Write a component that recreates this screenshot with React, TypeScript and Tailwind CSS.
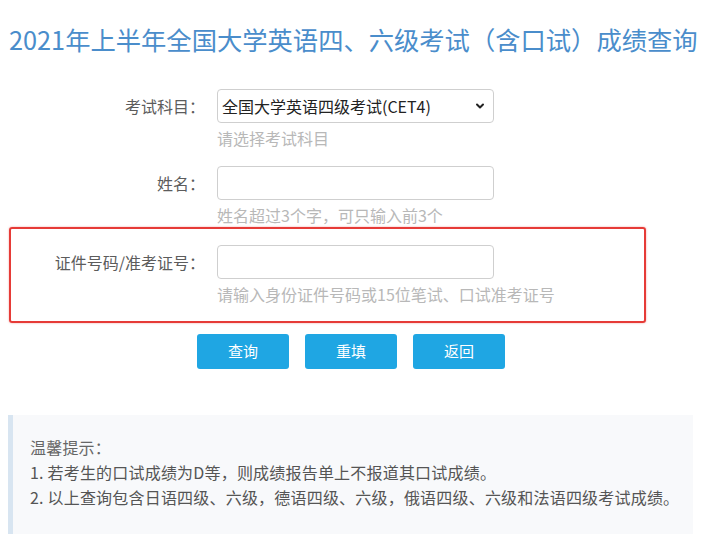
import { ChevronDown } from 'lucide-react';

const hintClass = 'mt-[4px] text-[16px] leading-[22px] text-[#b8b8b8]';
const inputClass =
  'h-[34px] w-[277px] rounded-[4px] border border-[#cfcfcf] bg-white px-[4px] text-[16px] text-[#222] outline-none';

function Row({ label, hint, children }: { label: string; hint: string; children: React.ReactNode }) {
  return (
    <div className="flex items-start">
      <div className="w-[194px] shrink-0 text-right text-[16px] leading-[34px] text-[#5c5c5c]">{label}</div>
      <div className="ml-[12px] flex flex-col">
        {children}
        <p className={hintClass}>{hint}</p>
      </div>
    </div>
  );
}

export default function App() {
  return (
    <div className="h-[542px] w-[720px] overflow-hidden bg-white font-['Noto_Sans_CJK_SC','Noto_Sans',sans-serif]">
      {/* Title */}
      <h1 className="pl-[9px] pt-[21px] text-[25.3px] leading-[37px] font-normal text-[#4a8dcb] whitespace-nowrap">
        2021年上半年全国大学英语四、六级考试（含口试）成绩查询
      </h1>

      {/* Form */}
      <div className="mt-[31px] pl-[9px]">
        <div className="pl-[2px]">
          <Row label="考试科目：" hint="请选择考试科目">
            <div className="relative">
              <select className={`${inputClass} w-[275px] appearance-none`} defaultValue="cet4">
                <option value="cet4">全国大学英语四级考试(CET4)</option>
                <option value="cet6">全国大学英语六级考试(CET6)</option>
              </select>
              <ChevronDown
                className="pointer-events-none absolute right-[8px] top-[11px] h-[12px] w-[12px] text-[#222]"
                strokeWidth={4}
              />
            </div>
          </Row>
          <div className="mt-[17px]">
            <Row label="姓名：" hint="姓名超过3个字，可只输入前3个">
              <input className={inputClass} />
            </Row>
          </div>
        </div>

        {/* Highlighted ID row */}
        <div className="mt-[1px] w-[637px] rounded-[3px] border-2 border-[#e63b37] pt-[16px] pb-[16px] shadow-[0_0_2px_rgba(230,59,55,0.5)]">
          <Row label="证件号码/准考证号：" hint="请输入身份证件号码或15位笔试、口试准考证号">
            <input className={inputClass} />
          </Row>
        </div>
      </div>

      {/* Buttons */}
      <div className="mt-[11px] ml-[197px] flex gap-[16px]">
        {['查询', '重填', '返回'].map((t) => (
          <button
            key={t}
            className="h-[35px] w-[92px] rounded-[3px] bg-[#1fa6e3] text-[15px] text-white"
          >
            {t}
          </button>
        ))}
      </div>

      {/* Tips */}
      <div className="mt-[46px] ml-[8px] w-[685px] border-l-[5px] border-[#d8e5f1] bg-[#f8f9fb] pl-[17px] pt-[20px] pb-[24px] text-[16px] leading-[25px] tracking-[0.2px] text-[#555]">
        <p className="text-[#666]">温馨提示：</p>
        <p>1. 若考生的口试成绩为D等，则成绩报告单上不报道其口试成绩。</p>
        <p>2. 以上查询包含日语四级、六级，德语四级、六级，俄语四级、六级和法语四级考试成绩。</p>
      </div>
    </div>
  );
}
